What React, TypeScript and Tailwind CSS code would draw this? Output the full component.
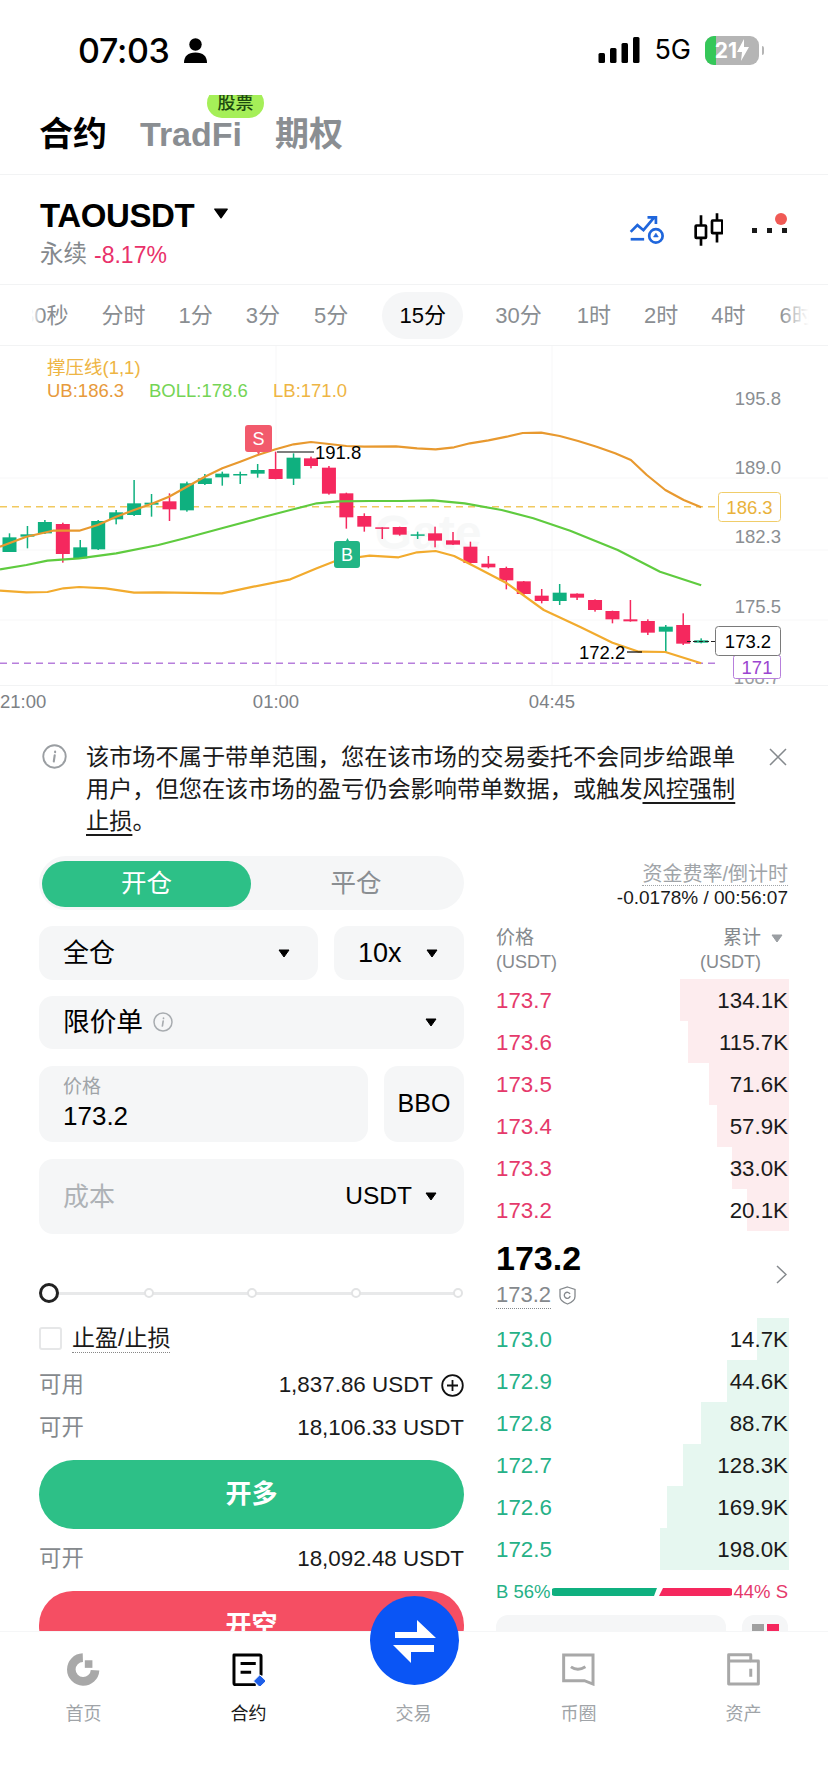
const red = "#f5285e";
const green = "#0fb07f";

// chart data, in the units read off the reference crop (x * 1.894, (y - 340) * 3)
const X = (x: number) => x / 1.894;
const Y = (y: number) => y / 3 + 340;

const candles: [number, number, number, number, number, "g" | "r"][] = [
  [18, 580, 636, 592, 636, "g"], [52, 558, 625, 583, 590, "g"], [85, 540, 582, 546, 580, "g"],
  [119, 548, 668, 552, 642, "r"], [152, 600, 655, 622, 655, "g"], [186, 540, 630, 543, 628, "g"],
  [220, 510, 553, 517, 538, "g"], [254, 420, 528, 490, 525, "g"], [287, 462, 530, 488, 494, "g"],
  [321, 460, 543, 484, 508, "r"], [354, 425, 515, 430, 511, "g"], [388, 402, 435, 415, 432, "g"],
  [421, 395, 437, 401, 412, "g"], [455, 395, 432, 402, 405, "g"], [488, 372, 413, 390, 401, "g"],
  [522, 335, 418, 387, 417, "r"], [556, 340, 435, 353, 416, "g"], [589, 350, 385, 355, 378, "r"],
  [623, 378, 464, 383, 461, "r"], [656, 458, 566, 460, 532, "r"], [690, 520, 575, 528, 560, "r"],
  [724, 562, 597, 562, 565, "r"], [757, 560, 587, 561, 584, "r"], [791, 575, 597, 583, 587, "g"],
  [824, 560, 622, 580, 602, "r"], [858, 576, 615, 601, 614, "r"], [891, 605, 675, 620, 669, "r"],
  [925, 648, 685, 671, 682, "r"], [959, 680, 748, 684, 721, "r"], [992, 723, 765, 724, 762, "r"],
  [1026, 747, 790, 767, 783, "r"], [1060, 732, 795, 758, 783, "g"], [1093, 760, 780, 761, 773, "r"],
  [1127, 778, 815, 780, 810, "r"], [1160, 812, 850, 813, 838, "r"], [1194, 780, 845, 838, 844, "r"],
  [1227, 838, 885, 843, 878, "r"], [1261, 855, 936, 860, 875, "g"], [1294, 820, 915, 855, 911, "r"],
  [1328, 895, 910, 901, 908, "g"],
];

const ub = [0,620,50,590,100,572,150,572,185,555,220,530,254,510,290,490,320,470,354,440,388,410,421,385,455,365,488,345,522,328,556,313,589,306,623,312,656,318,690,320,750,319,790,325,825,328,860,322,890,310,925,301,960,290,990,279,1025,278,1060,288,1095,303,1130,320,1165,340,1195,360,1225,405,1260,450,1295,480,1328,502];
const boll = [0,688,50,675,90,662,150,655,220,640,300,615,350,595,420,565,490,535,550,510,600,490,640,484,700,483,760,483,820,481,880,490,950,510,1010,535,1080,572,1170,630,1250,695,1328,736];
const lb = [0,752,50,757,90,756,120,745,150,741,200,745,254,758,300,757,420,760,480,740,550,718,600,685,640,660,700,647,755,652,790,637,825,633,860,648,900,680,960,730,1030,810,1100,862,1160,908,1210,935,1260,936,1328,970];

const toPoints = (a: number[]) => {
  const out: string[] = [];
  for (let i = 0; i < a.length; i += 2) out.push(`${X(a[i]).toFixed(1)},${Y(a[i + 1]).toFixed(1)}`);
  return out.join(" ");
};

const asks = [
  ["173.7", "134.1K", 109], ["173.6", "115.7K", 101], ["173.5", "71.6K", 80],
  ["173.4", "57.9K", 72], ["173.3", "33.0K", 57], ["173.2", "20.1K", 42],
] as const;
const bids = [
  ["173.0", "14.7K", 32], ["172.9", "44.6K", 62], ["172.8", "88.7K", 88],
  ["172.7", "128.3K", 106], ["172.6", "169.9K", 122], ["172.5", "198.0K", 129],
] as const;

const Caret = ({ className = "" }: { className?: string }) => (
  <svg width="12" height="9" viewBox="0 0 12 9" className={className}>
    <path d="M1 1h10L6 8z" fill="currentColor" stroke="currentColor" strokeLinejoin="round" />
  </svg>
);

const InfoIcon = ({ size, color }: { size: number; color: string }) => (
  <svg width={size} height={size} viewBox="0 0 24 24" fill="none" stroke={color} strokeWidth="1.8">
    <circle cx="12" cy="12" r="10.8" />
    <path d="M12.6 7.2v.6M12.2 10.8l-.9 6" strokeWidth="2" strokeLinecap="round" />
  </svg>
);

const StatusBar = () => (
  <div className="h-[95px] relative flex items-start justify-between pl-[78px] pr-[64px] pt-[33px]">
    <div className="flex items-center gap-[14px] h-[34px]">
      <span className="font-['Inter',sans-serif] text-[34px] font-medium text-black tracking-[-0.3px]">07:03</span>
      <svg width="23" height="25" viewBox="0 0 23 25" fill="#000">
        <circle cx="11.5" cy="6.5" r="6.2" />
        <path d="M0 25c0-7 4-10.500 11.500-10.500S23 18 23 25z" />
      </svg>
    </div>
    <div className="flex items-center h-[34px]">
      <svg width="42" height="26" viewBox="0 0 41 26" fill="#000">
        <rect x="0" y="16" width="6.500" height="10" rx="1.500" />
        <rect x="11.500" y="11" width="6.500" height="15" rx="1.500" />
        <rect x="23" y="6" width="6.500" height="20" rx="1.500" />
        <rect x="34.500" y="0" width="6.500" height="26" rx="1.500" />
      </svg>
      <span className="ml-[14px] font-['Inter',sans-serif] text-[27px] font-normal text-black">5G</span>
      <div className="ml-[14px] relative w-[54px] h-[29px] rounded-[9px] bg-[#b5b5b5] overflow-hidden flex items-center justify-center">
        <div className="absolute left-0 inset-y-0 w-[11px] bg-[#35c759]" />
        <span className="relative font-['Inter',sans-serif] text-[21px] font-bold text-white leading-none">21</span>
        <svg width="12" height="22" viewBox="0 0 12 22" fill="#fff" className="relative">
          <path d="M7 0L0 13h5l-1 9 8-14H7z" />
        </svg>
      </div>
      <div className="ml-[3px] w-[2px] h-[9px] rounded-r bg-[#b5b5b5]" />
    </div>
  </div>
);

const TopTabs = () => (
  <div className="relative h-[80px] overflow-hidden border-b border-[#f2f3f4] flex items-center gap-[33px] pl-[39px] pb-[1px] text-[34px] font-bold text-[#8a8e92]">
    <span className="text-black">合约</span>
    <span>TradFi</span>
    <span>期权</span>
    <div className="absolute left-[207px] -top-[7px] w-[57px] h-[30px] rounded-full bg-[#a5ef58] flex items-center justify-center text-[18px] font-medium text-[#1c4a10]">股票</div>
  </div>
);

const SymbolBar = () => (
  <div className="h-[110px] border-b border-[#f2f3f4] flex items-start justify-between pl-[40px] pr-[41px]">
    <div>
      <div className="flex items-center mt-[21px] h-[40px]">
        <span className="text-[33px] font-bold text-black tracking-[-0.4px]">TAOUSDT</span>
        <Caret className="ml-[21px] -mt-[6px] text-black scale-125" />
      </div>
      <div className="flex items-center mt-[5px] h-[28px] text-[23.500px]">
        <span className="text-[#85898d]">永续</span>
        <span className="ml-[7px] text-[#e9316a] text-[23px]">-8.17%</span>
      </div>
    </div>
    <div className="flex items-center mt-[38px] relative">
      <svg width="37" height="29" viewBox="0 0 110 86" fill="none" stroke="#1f66dc" strokeWidth="8">
        <path d="M5 50l20-20 18 15L75 7M55 7h25v20" />
        <path d="M5 72h40" />
        <circle cx="80" cy="62" r="20" />
        <path d="M80 54l7 11H73z" fill="#1f66dc" strokeWidth="2" />
      </svg>
      <svg width="30" height="33" viewBox="0 0 90 98" fill="none" stroke="#000" strokeWidth="8" className="ml-[27px]">
        <path d="M24 6v31M24 74v24M72 0v22M72 60v28" />
        <rect x="8" y="37" width="31" height="37" rx="2" />
        <rect x="57" y="22" width="31" height="38" rx="2" />
      </svg>
      <div className="ml-[29px] flex items-center gap-[10px] mt-[1px]">
        <div className="w-[5px] h-[5px] bg-[#1a1a1a]" />
        <div className="w-[5px] h-[5px] bg-[#1a1a1a]" />
        <div className="w-[5px] h-[5px] bg-[#1a1a1a]" />
      </div>
      <div className="absolute right-0 top-0 w-[12px] h-[12px] rounded-full bg-[#f05a55]" />
    </div>
  </div>
);

const TimeBar = () => (
  <div className="relative h-[61px] border-b border-[#f2f3f4] overflow-hidden flex items-center text-[22px] text-[#8a8e92] whitespace-nowrap pl-[22px]">
    <span>30秒</span>
    <span className="ml-[33px]">分时</span>
    <span className="ml-[33px]">1分</span>
    <span className="ml-[33px]">3分</span>
    <span className="ml-[34px]">5分</span>
    <span className="ml-[34px] h-[47px] w-[81px] rounded-full bg-[#f5f6f7] flex items-center justify-center text-black">15分</span>
    <span className="ml-[32px]">30分</span>
    <span className="ml-[35px]">1时</span>
    <span className="ml-[33px]">2时</span>
    <span className="ml-[33px]">4时</span>
    <span className="ml-[34px]">6时</span>
    <div className="absolute left-0 inset-y-0 w-[42px] bg-linear-to-r from-white from-75% to-transparent" />
    <div className="absolute right-0 inset-y-0 w-[48px] bg-linear-to-l from-white from-40% to-transparent" />
  </div>
);

const Chart = () => (
  <svg width="828" height="374" viewBox="0 346 828 374" className="block">
    <path d="M276 346v340M552 346v340M0 478h828M0 550h828M0 620h828" stroke="#f7f7f8" strokeWidth="1" />
    <path d="M0 685.500h828" stroke="#f2f3f4" strokeWidth="1" />
    <text x="47" y="374" fontSize="18.500" fill="#eeb544">撑压线(1,1)</text>
    <text x="47" y="397" fontSize="18.500" fill="#e79a3c">UB:186.3</text>
    <text x="149" y="397" fontSize="18.500" fill="#74d455">BOLL:178.6</text>
    <text x="273" y="397" fontSize="18.500" fill="#eeb544">LB:171.0</text>

    <text x="781" y="405" fontSize="18.500" fill="#8a8e92" textAnchor="end">195.8</text>
    <text x="781" y="474" fontSize="18.500" fill="#8a8e92" textAnchor="end">189.0</text>
    <text x="781" y="543" fontSize="18.500" fill="#8a8e92" textAnchor="end">182.3</text>
    <text x="781" y="613" fontSize="18.500" fill="#8a8e92" textAnchor="end">175.5</text>

    <text x="428" y="549" fontSize="48" fontWeight="700" fill="#f7f8f8" textAnchor="middle">Gate</text>

    <path d="M0 506.700h718" stroke="#f1c95f" strokeWidth="1.500" strokeDasharray="7 5" />
    <path d="M0 663.300h715" stroke="#b77fdc" strokeWidth="1.500" strokeDasharray="7 5" />

    {candles.map(([x, wt, wb, bt, bb, c], i) => {
      const color = c === "g" ? green : red;
      return (
        <g key={i} fill={color} stroke="none">
          <rect x={X(x) - 0.75} y={Y(wt)} width="1.500" height={(wb - wt) / 3} />
          <rect x={X(x) - 7} y={Y(bt)} width="14" height={Math.max((bb - bt) / 3, 1.5)} />
        </g>
      );
    })}

    <polyline points={toPoints(ub)} fill="none" stroke="#e8992f" strokeWidth="2.200" strokeLinejoin="round" />
    <polyline points={toPoints(boll)} fill="none" stroke="#5fcb3f" strokeWidth="2.200" strokeLinejoin="round" />
    <polyline points={toPoints(lb)} fill="none" stroke="#f2ab2e" strokeWidth="2.200" strokeLinejoin="round" />

    <path d="M277 452h37" stroke="#000" strokeWidth="1.200" />
    <text x="315" y="459" fontSize="18.500" fill="#000">191.8</text>
    <path d="M627 652h15" stroke="#000" strokeWidth="1.200" />
    <text x="579" y="659" fontSize="18.500" fill="#000">172.2</text>
    <path d="M687 641.500h28" stroke="#222" strokeWidth="1.200" strokeDasharray="4 2" />

    <path d="M248 425h21a3 3 0 0 1 3 3v21a3 3 0 0 1-3 3h-9l-1.500 3-1.500-3h-9a3 3 0 0 1-3-3v-21a3 3 0 0 1 3-3z" fill="#f25a6c" />
    <text x="258.500" y="445" fontSize="18" fill="#fff" textAnchor="middle">S</text>
    <path d="M337 541h9l1.500-3 1.500 3h8a3 3 0 0 1 3 3v21a3 3 0 0 1-3 3h-20a3 3 0 0 1-3-3v-21a3 3 0 0 1 3-3z" fill="#22b585" />
    <text x="347" y="561" fontSize="18" fill="#fff" textAnchor="middle">B</text>

    <text x="757" y="684" fontSize="18.500" fill="#9a9ea2" textAnchor="middle">168.7</text>
    <rect x="733.500" y="655.500" width="47" height="23" rx="2" fill="#fff" stroke="#b77fdc" />
    <text x="757" y="674" fontSize="18.500" fill="#9b45d0" textAnchor="middle">171</text>
    <rect x="718.500" y="492.500" width="62" height="29" rx="3" fill="#fff" stroke="#f0cd6a" />
    <text x="749.500" y="514" fontSize="18.500" fill="#e9b23b" textAnchor="middle">186.3</text>
    <rect x="715.500" y="626.500" width="65" height="29" rx="3" fill="#fff" stroke="#7a7a7a" />
    <text x="748" y="648" fontSize="18.500" fill="#000" textAnchor="middle">173.2</text>

    <text x="0" y="708" fontSize="18.500" fill="#7d8185">21:00</text>
    <text x="276" y="708" fontSize="18.500" fill="#7d8185" textAnchor="middle">01:00</text>
    <text x="552" y="708" fontSize="18.500" fill="#7d8185" textAnchor="middle">04:45</text>
  </svg>
);

const Banner = () => (
  <div className="flex items-start pl-[42px] pt-[21px] pb-[19px]">
    <div className="mt-[3px]"><InfoIcon size={25} color="#9a9ea2" /></div>
    <p className="ml-[19px] w-[652px] text-[23.200px] leading-[32px] text-[#1a1a1a]">
      该市场不属于带单范围，您在该市场的交易委托不会同步给跟单用户，但您在该市场的盈亏仍会影响带单数据，或触发
      <span className="underline underline-offset-[5px] decoration-[1.5px]">风控强制止损</span>。
    </p>
    <svg width="18" height="18" viewBox="0 0 18 18" stroke="#85898d" strokeWidth="1.500" className="ml-[31px] mt-[7px]">
      <path d="M1 1l16 16M17 1L1 17" />
    </svg>
  </div>
);

const Field = ({ className, children }: { className: string; children: React.ReactNode }) => (
  <div className={`bg-[#f5f6f7] rounded-[14px] flex items-center ${className}`}>{children}</div>
);

const SliderDot = ({ className = "" }: { className?: string }) => (
  <div className={`relative w-[10px] h-[10px] rounded-full bg-white border-2 border-[#e2e3e4] ${className}`} />
);

const OrderForm = () => (
  <div className="w-[425px] shrink-0">
    <div className="h-[54px] rounded-full bg-[#f5f6f7] flex items-center px-[3px] text-[25.500px] pt-[1px]">
      <div className="w-[209px] h-[46px] rounded-full bg-[#2dc087] text-white flex items-center justify-center">开仓</div>
      <div className="flex-1 text-[#8a8e92] text-center">平仓</div>
    </div>

    <div className="flex gap-[16px] mt-[16px]">
      <Field className="w-[279px] h-[54px] pl-[24px] pr-[28px] justify-between text-[26px] text-black">
        <span>全仓</span><Caret />
      </Field>
      <Field className="w-[130px] h-[54px] pl-[24px] pr-[26px] justify-between text-[27px] text-black">
        <span>10x</span><Caret />
      </Field>
    </div>

    <Field className="h-[53px] mt-[16px] pl-[24px] pr-[27px] justify-between text-[26.700px] text-black">
      <div className="flex items-center gap-[10px]">
        <span>限价单</span>
        <InfoIcon size={20} color="#a8acb0" />
      </div>
      <Caret />
    </Field>

    <div className="flex gap-[16px] mt-[17px]">
      <Field className="w-[329px] h-[76px] pl-[24px] flex-col !items-start justify-center">
        <span className="text-[19px] leading-[24px] text-[#a0a4a8]">价格</span>
        <span className="text-[26px] leading-[34px] text-black">173.2</span>
      </Field>
      <Field className="w-[80px] h-[76px] justify-center text-[25px] text-black">BBO</Field>
    </div>

    <Field className="h-[75px] mt-[17px] pl-[24px] pr-[27px] justify-between">
      <span className="text-[26px] text-[#aeb2b6] mt-[2px]">成本</span>
      <div className="flex items-center gap-[13px] text-[24.500px] text-black">
        <span>USDT</span><Caret />
      </div>
    </Field>

    <div className="relative h-[20px] mt-[49px] flex items-center">
      <div className="absolute left-[10px] right-[6px] h-[3px] bg-[#e8e9ea]" />
      <div className="relative w-[20px] h-[20px] rounded-full bg-white border-[3px] border-[#222]" />
      <SliderDot className="ml-[85px]" />
      <SliderDot className="ml-[93px]" />
      <SliderDot className="ml-[94px]" />
      <SliderDot className="ml-[92px]" />
    </div>

    <div className="flex items-center h-[22px] mt-[24px]">
      <div className="w-[23px] h-[23px] rounded-[3px] border-2 border-[#e6e7e8] bg-white" />
      <span className="ml-[10px] text-[23px] leading-[28px] text-[#1a1a1a] border-b border-dotted border-[#888]">止盈/止损</span>
    </div>

    <div className="flex items-center justify-between h-[30px] mt-[21px] text-[22.400px]">
      <span className="text-[#85898d]">可用</span>
      <div className="flex items-center gap-[8px] text-[#1a1a1a]">
        <span>1,837.86 USDT</span>
        <svg width="23" height="23" viewBox="0 0 23 23" fill="none" stroke="#111" strokeWidth="1.800">
          <circle cx="11.500" cy="11.500" r="10.300" />
          <path d="M6 11.500h11M11.500 6v11" />
        </svg>
      </div>
    </div>
    <div className="flex items-center justify-between h-[30px] mt-[13px] text-[22.400px]">
      <span className="text-[#85898d]">可开</span>
      <span className="text-[#1a1a1a]">18,106.33 USDT</span>
    </div>

    <div className="h-[69px] mt-[17px] rounded-full bg-[#2dc087] text-white text-[26px] font-bold flex items-center justify-center">开多</div>

    <div className="flex items-center justify-between h-[30px] mt-[15px] text-[22.400px]">
      <span className="text-[#85898d]">可开</span>
      <span className="text-[#1a1a1a]">18,092.48 USDT</span>
    </div>

    <div className="h-[69px] mt-[17px] rounded-[34px] bg-[#f54e63] text-white text-[26px] font-bold flex items-center justify-center">开空</div>
  </div>
);

const BookRow = ({ price, size, depth, side }: { price: string; size: string; depth: number; side: "ask" | "bid" }) => (
  <div className="relative h-[42px] pt-[2px] flex items-center justify-between text-[22.300px]">
    <div className={`absolute top-0 bottom-0 -right-[1px] ${side === "ask" ? "bg-[#fdecee]" : "bg-[#e6f7f0]"}`} style={{ width: depth }} />
    <span className={`relative ${side === "ask" ? "text-[#e5396b]" : "text-[#26b187]"}`}>{price}</span>
    <span className="relative text-[#1a1a1a]">{size}</span>
  </div>
);

const OrderBook = () => (
  <div className="w-[292px] shrink-0 ml-[32px]">
    <div className="pt-[6px] text-right leading-[24px]">
      <div className="h-[24px]">
        <span className="text-[20px] text-[#a0a4a8] border-b border-dotted border-[#a0a4a8]">资金费率/倒计时</span>
      </div>
      <div className="h-[24px] text-[19px] text-[#1a1a1a]">-0.0178% / 00:56:07</div>
    </div>

    <div className="flex justify-between mt-[16px] text-[18px] leading-[24px] text-[#85898d] pr-[27px]">
      <div>
        <div className="text-[19px]">价格</div>
        <div>(USDT)</div>
      </div>
      <div className="text-right relative">
        <div className="text-[19px]">累计</div>
        <div>(USDT)</div>
        <Caret className="absolute -right-[22px] top-[8px] text-[#9a9ea2]" />
      </div>
    </div>

    <div className="mt-[5px]">
      {asks.map(([p, s, d]) => <BookRow key={p} price={p} size={s} depth={d} side="ask" />)}
    </div>

    <div className="relative mt-[6px]">
      <div className="text-[34px] leading-[42px] font-bold text-black">173.2</div>
      <div className="flex items-center h-[32px]">
        <span className="text-[22px] leading-[26px] text-[#85898d] border-b border-dotted border-[#85898d]">173.2</span>
        <svg width="17" height="19" viewBox="0 0 17 19" fill="none" stroke="#85898d" strokeWidth="1.300" className="ml-[8px]">
          <path d="M8.500 1L16 3.500v7c0 3.500-3.500 6-7.500 7.500C4.500 16.500 1 14 1 10.500v-7z" />
          <path d="M11 8a3 3 0 1 0 .2 2" />
        </svg>
      </div>
      <svg width="11" height="19" viewBox="0 0 11 19" fill="none" stroke="#85898d" strokeWidth="1.500" className="absolute right-[1px] top-[28px]">
        <path d="M1 1l9 8.500L1 18" />
      </svg>
    </div>

    <div className="mt-[7px]">
      {bids.map(([p, s, d]) => <BookRow key={p} price={p} size={s} depth={d} side="bid" />)}
    </div>

    <div className="flex items-center justify-between h-[20px] mt-[12px] text-[18.500px] whitespace-nowrap">
      <span className="text-[#26b187]">B 56%</span>
      <svg width="180" height="8" viewBox="0 0 180 8" className="shrink-0">
        <path d="M3 0H105L102 8H3A3 3 0 0 1 3 0z" fill={green} />
        <path d="M111 0H177A3 3 0 0 1 177 8H107z" fill={red} />
      </svg>
      <span className="text-[#e5396b]">44% S</span>
    </div>

    <div className="flex justify-between mt-[13px]">
      <div className="w-[230px] h-[60px] rounded-[12px] bg-[#f5f6f7] pl-[18px] pt-[8px] text-[22px] text-[#1a1a1a]">0.1</div>
      <div className="w-[46px] h-[60px] rounded-[12px] bg-[#f5f6f7] flex justify-center gap-[3px] pt-[9px]">
        <div className="w-[12px] h-[12px] bg-[#a0a0a0]" />
        <div className="w-[12px] h-[12px] bg-[#f5285e]" />
      </div>
    </div>
  </div>
);

const NavItem = ({ label, active, children }: { label: string; active?: boolean; children?: React.ReactNode }) => (
  <div className="w-[165px] flex flex-col items-center">
    <div className="h-[36px] flex items-center justify-center">{children}</div>
    <span className={`mt-[15px] text-[18px] leading-[24px] ${active ? "text-[#1a1a1a]" : "text-[#a0a4a8]"}`}>{label}</span>
  </div>
);

const BottomNav = () => (
  <div className="relative h-[161px] bg-white border-t border-[#f5f6f7] flex pt-[19px] pl-[1px]">
    <NavItem label="首页">
      <svg width="33" height="33" viewBox="0 0 100 100" fill="none">
        <path d="M48 14A36 36 0 1 0 85 52" stroke="#a8a8a8" strokeWidth="26" />
        <rect x="54" y="22" width="23" height="23" fill="#a8a8a8" />
      </svg>
    </NavItem>
    <NavItem label="合约" active>
      <svg width="33" height="33" viewBox="0 0 100 100" fill="none">
        <path d="M72 96H10a4 4 0 0 1-4-4V6h78a4 4 0 0 1 4 4v58" stroke="#000" strokeWidth="9" strokeLinejoin="round" />
        <path d="M26 32h46M26 58h32" stroke="#000" strokeWidth="9" />
        <path d="M84 66l20 19-20 19-19-19z" fill="#1f5fe8" stroke="#fff" strokeWidth="3" />
      </svg>
    </NavItem>
    <NavItem label="交易" />
    <NavItem label="币圈">
      <svg width="33" height="33" viewBox="0 0 100 100" fill="none" stroke="#a8a8a8" strokeWidth="9">
        <path d="M5 6H94V94L68 84H5z" />
        <path d="M27 42c14 10 28 10 44 0" />
      </svg>
    </NavItem>
    <NavItem label="资产">
      <svg width="33" height="33" viewBox="0 0 100 100" fill="none" stroke="#a8a8a8" strokeWidth="9" strokeLinejoin="round">
        <path d="M5 94V5H72V24H95V94z" />
        <path d="M5 24H72M72 48v24" />
      </svg>
    </NavItem>
    <div className="absolute left-[370px] -top-[36px] w-[89px] h-[89px] rounded-full bg-[#0a55f5] flex items-center justify-center">
      <svg width="89" height="89" viewBox="0 0 89 89" fill="#fff">
        <path d="M25 36H47V24L66 42H25z" />
        <path d="M23 49H64V56H41V67z" />
      </svg>
    </div>
  </div>
);

export default function App() {
  return (
    <div className="w-[828px] h-[1792px] flex flex-col bg-white overflow-hidden font-['Liberation_Sans','Noto_Sans_CJK_SC',sans-serif]">
      <div className="flex-1 min-h-0 overflow-hidden">
        <StatusBar />
        <TopTabs />
        <SymbolBar />
        <TimeBar />
        <Chart />
        <Banner />
        <div className="flex pl-[39px]">
          <OrderForm />
          <OrderBook />
        </div>
      </div>
      <BottomNav />
    </div>
  );
}
